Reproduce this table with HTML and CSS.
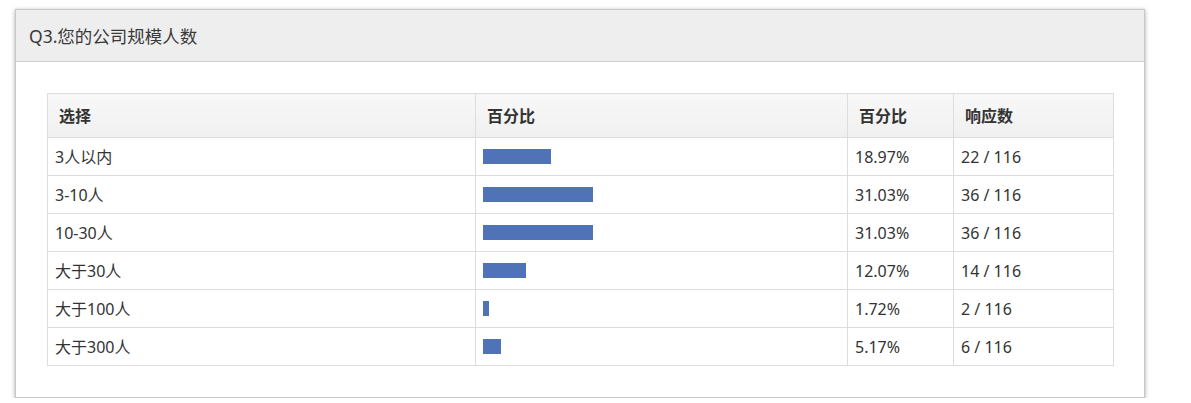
FILE: index.html
```html
<!DOCTYPE html>
<html lang="zh-CN">
<head>
  <meta charset="UTF-8" />
  <title>Q3.您的公司规模人数</title>
  <link rel="stylesheet" href="styles.css">
</head>
<body>
  <div class="panel">
    <div class="panel-heading">Q3.您的公司规模人数</div>
    <div class="panel-body">
      <table class="result-table">
        <colgroup>
          <col class="col-choice">
          <col class="col-bar">
          <col class="col-pct">
          <col class="col-count">
        </colgroup>
        <thead>
          <tr>
            <th>选择</th>
            <th>百分比</th>
            <th>百分比</th>
            <th>响应数</th>
          </tr>
        </thead>
        <tbody id="rows"></tbody>
      </table>
    </div>
  </div>
  <script>
    const answers = [
      { label: "3人以内", count: 22 },
      { label: "3-10人", count: 36 },
      { label: "10-30人", count: 36 },
      { label: "大于30人", count: 14 },
      { label: "大于100人", count: 2 },
      { label: "大于300人", count: 6 },
    ];
    const total = 116;
    const rows = document.getElementById('rows');
    answers.forEach(a => {
      const pct = (a.count / total * 100).toFixed(2);
      const tr = document.createElement('tr');
      tr.innerHTML = `
        <td>${a.label}</td>
        <td><div class="bar" style="width: ${pct}%"></div></td>
        <td>${pct}%</td>
        <td>${a.count} / ${total}</td>
      `;
      rows.appendChild(tr);
    });
  </script>
</body>
</html>
```

FILE: styles.css
```css
* {
  box-sizing: border-box;
}
body {
  margin: 0;
  padding: 9px 0 0 15px;
  background: #fff;
  font-family: "Noto Sans", "Noto Sans CJK SC", sans-serif;
  font-size: 16px;
  color: #333;
}
.panel {
  width: 1130px;
  background: #fff;
  border: 1px solid #c8c8c8;
  box-shadow: 0 1px 4px rgba(0, 0, 0, 0.35);
}
.panel-heading {
  height: 52px;
  padding: 0 13px;
  display: flex;
  align-items: center;
  background: #eeeeee;
  border-bottom: 1px solid #cfcfcf;
  font-size: 17.5px;
  color: #3a3a3a;
}
.panel-body {
  padding: 31px 32px 31px 31px;
}
.result-table {
  width: 1066px;
  border-collapse: collapse;
  table-layout: fixed;
}
.col-choice { width: 428px; }
.col-bar { width: 372px; }
.col-pct { width: 106px; }
.col-count { width: 160px; }
.result-table th,
.result-table td {
  border: 1px solid #dddddd;
  text-align: left;
  vertical-align: middle;
  line-height: 20px;
}
.result-table th {
  height: 44px;
  padding: 0 11px;
  font-weight: bold;
  background: linear-gradient(to bottom, #f8f8f8, #f0f0f0);
}
.result-table td {
  height: 38px;
  padding: 0 8px 0 7px;
}
.bar {
  height: 15px;
  background: #5072b7;
}
```
